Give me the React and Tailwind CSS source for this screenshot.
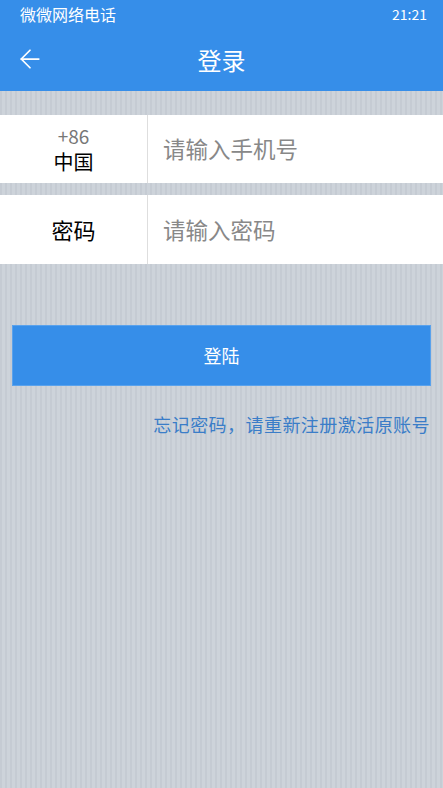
import { ArrowLeft } from 'lucide-react';

export default function App() {
  return (
    <div
      className="flex h-[788px] w-[443px] flex-col overflow-hidden bg-[repeating-linear-gradient(90deg,#c5cbd3_0px,#c5cbd3_2px,#cdd3da_2px,#cdd3da_5px)]"
      style={{ fontFamily: '"Noto Sans CJK SC", "Noto Sans", sans-serif' }}
    >
      {/* header */}
      <header className="h-[91px] bg-[#368ee9] text-white">
        <div className="flex h-[28px] items-center justify-between pl-[20px] pr-[16px]">
          <span className="text-[16px] leading-none">微微网络电话</span>
          <span className="text-[14px] leading-none">21:21</span>
        </div>
        <div className="relative flex h-[63px] items-center justify-center">
          <ArrowLeft size={30} strokeWidth={1.4} className="absolute left-[15px] top-[16px]" />
          <h1 className="text-[24px] leading-none">登录</h1>
        </div>
      </header>

      <main className="flex flex-col pt-[24px]">
        <div className="flex h-[68px] bg-white">
          <div className="flex w-[148px] flex-col items-center justify-center border-r border-[#dedede] leading-none">
            <span className="text-[19px] leading-[19px] text-[#777]">+86</span>
            <span className="mt-[7px] text-[20px] leading-[20px] text-black">中国</span>
          </div>
          <div className="flex flex-1 items-center pl-[15px] text-[22.5px] text-[#888]">请输入手机号</div>
        </div>

        <div className="mt-[12px] flex h-[69px] bg-white">
          <div className="flex w-[148px] items-center justify-center border-r border-[#dedede] text-[22px] text-black">
            密码
          </div>
          <div className="flex flex-1 items-center pl-[15px] text-[22.5px] text-[#888]">请输入密码</div>
        </div>

        <div className="px-[12px] pt-[61px]">
          <button className="flex h-[61px] w-full items-center justify-center border border-[#5aa2ec] bg-[#368ee9] text-[18px] text-white">
            登陆
          </button>
        </div>

        <p className="mt-[29px] pr-[13px] text-right text-[18px] leading-none tracking-[0.45px] text-[#3a7dc8]">
          忘记密码，请重新注册激活原账号
        </p>
      </main>
    </div>
  );
}
